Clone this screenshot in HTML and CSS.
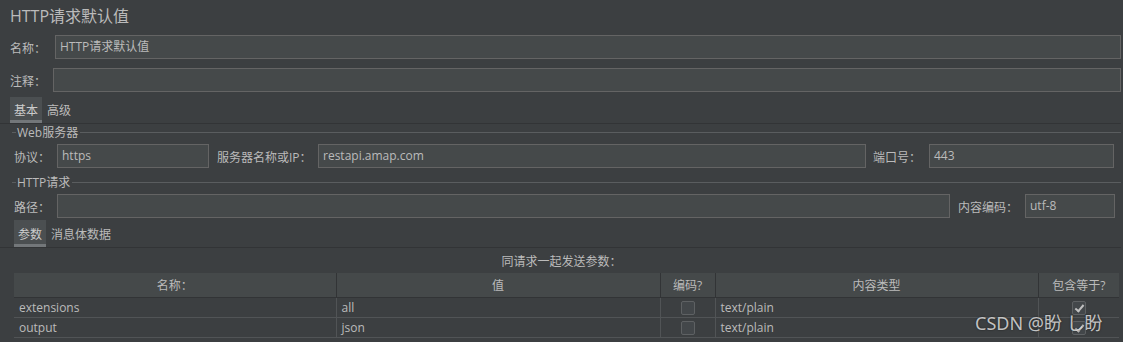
FILE: index.html
```html
<!DOCTYPE html>
<html lang="zh-CN">
<head>
    <meta charset="UTF-8">
    <title>HTTP请求默认值</title>
    <link rel="stylesheet" href="styles.css">
</head>
<body>
    <div class="title">HTTP请求默认值</div>

    <div class="row row-name">
        <label class="lbl w-name">名称：</label>
        <div class="field grow">HTTP请求默认值</div>
    </div>
    <div class="row row-comment">
        <label class="lbl w-comment">注释：</label>
        <div class="field grow"></div>
    </div>

    <div class="tabs tabs-top">
        <div class="tab active">基本</div>
        <div class="tab">高级</div>
    </div>

    <div class="group">
        <div class="group-title"><span class="dash"></span><span class="gt-text">Web服务器</span><span class="rule"></span></div>
        <div class="row row-inner">
            <label class="lbl w-short">协议：</label>
            <div class="field w-proto">https</div>
            <label class="lbl gap w-server">服务器名称或IP：</label>
            <div class="field grow">restapi.amap.com</div>
            <label class="lbl gap2 w-port">端口号：</label>
            <div class="field w-portin">443</div>
        </div>
    </div>

    <div class="group group2">
        <div class="group-title"><span class="dash"></span><span class="gt-text">HTTP请求</span><span class="rule"></span></div>
        <div class="row row-inner row-path">
            <label class="lbl w-short">路径：</label>
            <div class="field grow"></div>
            <label class="lbl gap w-enc">内容编码：</label>
            <div class="field w-encin">utf-8</div>
        </div>
    </div>

    <div class="tabs tabs-params">
        <div class="tab active">参数</div>
        <div class="tab">消息体数据</div>
    </div>

    <div class="caption">同请求一起发送参数：</div>

    <table class="params">
        <colgroup>
            <col style="width: 322px">
            <col style="width: 324px">
            <col style="width: 55px">
            <col style="width: 323px">
            <col style="width: 81px">
        </colgroup>
        <thead>
            <tr>
                <th>名称：</th>
                <th>值</th>
                <th>编码?</th>
                <th>内容类型</th>
                <th>包含等于?</th>
            </tr>
        </thead>
        <tbody>
            <tr>
                <td>extensions</td>
                <td>all</td>
                <td class="center"><span class="check"></span></td>
                <td>text/plain</td>
                <td class="center"><span class="check on"></span></td>
            </tr>
            <tr>
                <td>output</td>
                <td>json</td>
                <td class="center"><span class="check"></span></td>
                <td>text/plain</td>
                <td class="center"><span class="check on"></span></td>
            </tr>
        </tbody>
    </table>

    <div class="watermark">CSDN @盼 し盼</div>
</body>
</html>
```

FILE: styles.css
```css
body {
    margin: 0;
    background-color: #3c3f41;
    color: #bbbbbb;
    font-family: "Open Sans", "Noto Sans CJK SC", sans-serif;
    font-size: 12px;
    width: 1123px;
    height: 342px;
    overflow: hidden;
    position: relative;
}
.title {
    height: 35px;
    box-sizing: border-box;
    padding: 6px 0 0 10px;
    font-size: 16px;
    line-height: 20px;
}
.row {
    display: flex;
    align-items: center;
    height: 24px;
    padding-left: 10px;
    padding-right: 2px;
}
.row-comment {
    margin-top: 9px;
}
.row-inner {
    padding-left: 14px;
    padding-right: 9px;
}
.row-path {
    padding-right: 8px;
}
.lbl {
    flex: none;
    white-space: nowrap;
    padding-top: 2px;
}
.w-name { width: 45px; }
.w-comment { width: 43px; }
.w-short { width: 43px; }
.w-server { width: 101px; }
.w-port { width: 56px; }
.w-enc { width: 67px; }
.gap { margin-left: 8px; }
.gap2 { margin-left: 7px; }
.field {
    box-sizing: border-box;
    height: 24px;
    line-height: 22px;
    padding: 0 4px;
    background-color: #45494a;
    border: 1px solid #646464;
    white-space: nowrap;
    overflow: hidden;
}
.grow { flex: 1; }
.w-proto { width: 152px; flex: none; }
.w-portin { width: 185px; flex: none; }
.w-encin { width: 90px; flex: none; }

.tabs {
    display: flex;
    align-items: stretch;
    border-bottom: 1px solid #323436;
    margin-right: 2px;
}
.tabs-top {
    margin-top: 5px;
    padding-left: 10px;
    height: 26px;
}
.tabs-params {
    margin-top: 2px;
    padding-left: 14px;
    height: 27px;
}
.tab {
    display: flex;
    align-items: center;
    padding: 3px 4px 0;
    border-bottom: 3px solid transparent;
    margin-right: 1px;
}
.tab.active {
    background-color: #4b4f51;
    border-bottom-color: #73777a;
    color: #cccccc;
}

.group-title {
    display: flex;
    align-items: center;
    height: 16px;
    margin-bottom: 4px;
    padding-left: 12px;
    padding-right: 2px;
}
.group2 {
    margin-top: 6px;
}
.dash {
    width: 4px;
    border-top: 1px solid #5a5d5f;
}
.gt-text {
    padding: 0 2px 0 1px;
    color: #bbbbbb;
}
.rule {
    flex: 1;
    border-top: 1px solid #5a5d5f;
}

.caption {
    height: 25px;
    line-height: 28px;
    text-align: center;
    box-sizing: border-box;
}

.params {
    margin-left: 14px;
    width: 1105px;
    table-layout: fixed;
    border-collapse: collapse;
}
.params th {
    height: 24px;
    padding: 0;
    font-weight: normal;
    background-color: #45494a;
    border-left: 1px solid #323436;
    border-bottom: 1px solid #323436;
    text-align: center;
    color: #bbbbbb;
}
.params th:first-child {
    border-left: none;
}
.params td {
    height: 18px;
    padding: 1px 5px 0;
    border-left: 1px solid #515456;
    border-bottom: 1px solid #515456;
    white-space: nowrap;
    line-height: 18px;
}
.params td:first-child {
    border-left: none;
}
.params td.center {
    text-align: center;
    padding: 0;
    height: 19px;
}
.check {
    display: inline-block;
    vertical-align: middle;
    width: 12px;
    height: 12px;
    border: 1px solid #5e6163;
    background-color: #43474a;
    border-radius: 2px;
    position: relative;
}
.check.on::after {
    content: "";
    position: absolute;
    left: 4px;
    top: 1px;
    width: 3px;
    height: 7px;
    border-right: 2px solid #c0c0c0;
    border-bottom: 2px solid #c0c0c0;
    transform: rotate(40deg);
}

.watermark {
    position: absolute;
    left: 975px;
    top: 309px;
    font-family: "Noto Sans", "Noto Sans CJK SC", sans-serif;
    font-size: 18px;
    color: rgba(230, 230, 230, 0.82);
    text-shadow: 0 0 2px rgba(0, 0, 0, 0.6);
    white-space: nowrap;
}
```
